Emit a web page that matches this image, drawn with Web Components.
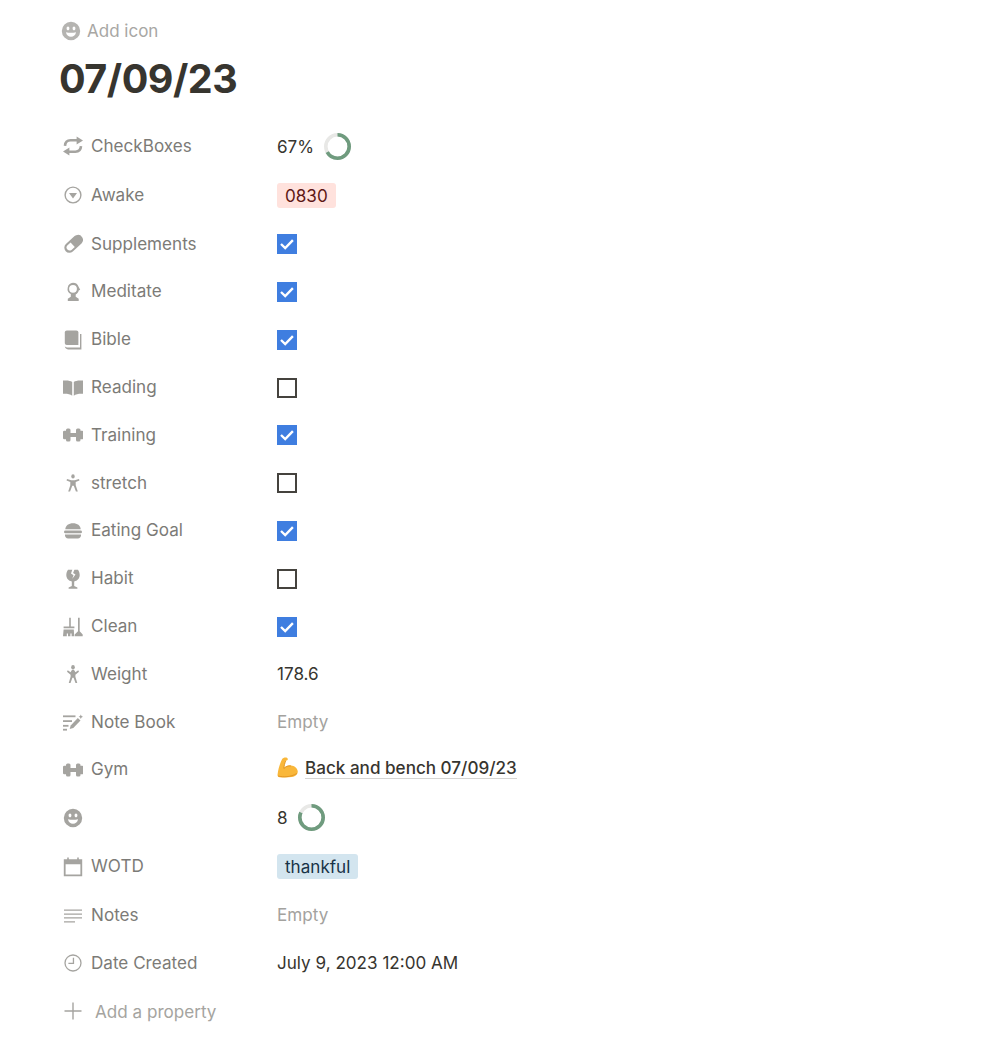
<!DOCTYPE html>
<html>
<head>
<meta charset="utf-8">
<style>
  html, body { margin: 0; background: #fff; }
  body { font-family: Inter, "Liberation Sans", sans-serif; color: #37352f; }
</style>
</head>
<body>
<page-header title="07/09/23"></page-header>
<property-list>
  <property-row icon="repeat" label="CheckBoxes"><value-ring value="67" text="67%"></value-ring></property-row>
  <property-row icon="awake" label="Awake" tall><value-tag color="red">0830</value-tag></property-row>
  <property-row icon="pill" label="Supplements"><check-box checked></check-box></property-row>
  <property-row icon="meditate" label="Meditate"><check-box checked></check-box></property-row>
  <property-row icon="bible" label="Bible"><check-box checked></check-box></property-row>
  <property-row icon="reading" label="Reading"><check-box></check-box></property-row>
  <property-row icon="dumbbell" label="Training"><check-box checked></check-box></property-row>
  <property-row icon="stretch" label="stretch"><check-box></check-box></property-row>
  <property-row icon="burger" label="Eating Goal"><check-box checked></check-box></property-row>
  <property-row icon="glass" label="Habit"><check-box></check-box></property-row>
  <property-row icon="clean" label="Clean"><check-box checked></check-box></property-row>
  <property-row icon="person" label="Weight">178.6</property-row>
  <property-row icon="note" label="Note Book"><value-empty></value-empty></property-row>
  <property-row icon="dumbbell" label="Gym"><page-link>Back and bench 07/09/23</page-link></property-row>
  <property-row icon="smile" label=""><value-ring value="82" text="8"></value-ring></property-row>
  <property-row icon="calendar" label="WOTD" tall><value-tag color="blue">thankful</value-tag></property-row>
  <property-row icon="lines" label="Notes"><value-empty></value-empty></property-row>
  <property-row icon="clock" label="Date Created">July 9, 2023 12:00 AM</property-row>
  <add-property></add-property>
</property-list>

<script>
const ICONS = {
  repeat: `<path d="M2 9.800C2.200 6.400 4.500 4.300 7.600 4.300h7" fill="none" stroke="currentColor" stroke-width="2.600"/><path d="M13.600.6l6.400 3.900-6.400 3.900z"/><path d="M18 10.200c-.2 3.400-2.500 5.500-5.600 5.500h-7" fill="none" stroke="currentColor" stroke-width="2.600"/><path d="M6.400 11.600L0 15.500l6.400 3.900z"/>`,
  awake: `<circle cx="10" cy="10" r="7.900" fill="none" stroke="currentColor" stroke-width="1.400"/><path d="M6 8h8l-4 5.500z"/>`,
  pill: `<path fill-rule="evenodd" d="M13.200 1.200a5 5 0 0 1 5.300 8.200l-8.700 8a5 5 0 0 1-6.900-7.300l8.700-8c.7-.5 1.500-.8 1.600-.9zM4.300 11.400a3.100 3.100 0 0 0 4.200 4.500l3.300-3-4.200-4.500z"/>`,
  meditate: `<path fill-rule="evenodd" d="M10 .8a6 6 0 0 1 5.700 4.300l1.500 2.600-1.500.8c-.3 1.800-1.400 3.200-3 3.900v2.400l3 1.900V19H4.800v-2.300l3-1.900v-2.700A6 6 0 0 1 10 .8zm0 2.100a3.900 3.900 0 1 0 0 7.800 3.900 3.900 0 0 0 0-7.800z"/>`,
  bible: `<path d="M1.800 2.600C1.800 1.500 2.700.6 3.800.6h9.600c1.100 0 2 .9 2 2V15H3.800c-1.100 0-2-.9-2-2z"/><path d="M17 4h1.400v15.400H5c-1.600 0-2.900-1.200-3.200-2.800.6.500 1.400.8 2.200.8h13z"/>`,
  reading: `<path d="M9.200 4C7.400 2.600 4.200 2.200 0 2.600v13.200c3.900-.2 7 .2 9.200 2z"/><path d="M10.800 4c1.800-1.400 5-1.800 9.200-1.400v13.200c-3.900-.2-7 .2-9.200 2z"/>`,
  dumbbell: `<rect x="0" y="5.800" width="4" height="8.400" rx="1.300"/><rect x="3" y="3.500" width="4.500" height="13" rx="1.500"/><rect x="7" y="8" width="7" height="4"/><rect x="13" y="3.500" width="4.500" height="13" rx="1.500"/><rect x="16.500" y="5.800" width="4" height="8.400" rx="1.300"/>`,
  stretch: `<g transform="translate(2.500 1) scale(.75 .92)"><circle cx="10" cy="2.700" r="2.300"/><path d="M2 5.300l5.800 1.600h4.400L18 5.300l.6 1.800-5 1.700v3.300l2.800 6.900h-2.500l-2.900-6.200H9l-2.900 6.200H3.600l2.800-6.900V8.800l-5-1.700z"/></g>`,
  burger: `<path d="M2.300 8.300C2.500 4.500 5.700 2.300 10 2.300s7.500 2.200 7.700 6z"/><rect x="1" y="9.500" width="18" height="2.800" rx="1.400"/><path d="M2 13.500h16v.7c0 1.900-1.300 3.300-3.100 3.300H5.100c-1.800 0-3.100-1.400-3.100-3.300z"/>`,
  glass: `<path fill-rule="evenodd" d="M5 .8h4.300L8 4.600l2.500 1.700-1.200 3.500 3.200-4.200-2.400-1.600L11.400.8H15c1.100 1.500 1.700 3.400 1.700 5.300 0 3.400-2.300 5.900-5.500 6.400v4.600l3.200 1.300v1.300H5.600v-1.300l3.200-1.300v-4.600c-3.200-.5-5.500-3-5.500-6.400C3.300 4.200 3.900 2.300 5 .8z"/>`,
  clean: `<path d="M6.200.8h1.600v8.800h3.600v1.600H.6V9.600h5.600z"/><path d="M.6 12.400h10.200l.4 6.800H8.600v-2.600H7.400v2.600H5v-2.600H3.800v2.600H0z"/><path d="M15 .8h1.700v13.500l3 3.300v1.600h-8v-1.600l3.300-3.300z"/>`,
  person: `<g transform="translate(2.500 .5) scale(.75 .95)"><circle cx="10" cy="2.800" r="2.400"/><path d="M10 5.400c1 0 1.700.4 2.200 1.200l1 1.500 3.800-2 1 1.500-4.800 3.100v2.100l2.500 6.800h-2.400L10.800 14H9.200l-2.500 5.600H4.300l2.500-6.800v-2.100L2 7.600l1-1.500 3.800 2 1-1.500c.5-.8 1.200-1.200 2.200-1.200z"/></g>`,
  note: `<path d="M0 3.400h12.500v1.800H0z"/><path d="M0 8.200h9v1.800H0z"/><path d="M0 12.900h5.500v1.800H0z"/><path d="M0 16.800h4v1.800H0z"/><path d="M14.800 6l2.700 2.500-7.200 7.500-3.600 1.100 1-3.600z"/><path d="M17.800 2.400l.7 1.600 1.500.7-1.500.7-.7 1.600-.7-1.600-1.500-.7 1.500-.7z"/>`,
  smile: `<path fill-rule="evenodd" d="M10 .8a9.200 9.200 0 1 1 0 18.400A9.200 9.200 0 0 1 10 .8zM7 5.600c-.8 0-1.400.8-1.400 1.800S6.200 9.200 7 9.200s1.400-.8 1.400-1.800S7.800 5.600 7 5.600zm6 0c-.8 0-1.400.8-1.400 1.800s.6 1.800 1.400 1.800 1.400-.8 1.400-1.800-.6-1.800-1.400-1.800zM5 11.300c.4 2.800 2.400 4.500 5 4.500s4.600-1.700 5-4.500c-3.300.7-6.700.7-10 0z"/>`,
  calendar: `<path fill-rule="evenodd" d="M4.200.4h1.600v1.900h8.400V.4h1.600v1.900h3.400v17H.8v-17h3.400zM2.600 7.200v10.300h14.800V7.200z"/>`,
  lines: `<path d="M1 3.500h18v1.300H1zM1 7.400h18v1.300H1zM1 11.300h18v1.300H1zM1 15.200h11v1.300H1z"/>`,
  clock: `<circle cx="10" cy="10" r="8" fill="none" stroke="currentColor" stroke-width="1.300"/><path d="M9.800 4.800h1.300v6.300H5.400V9.800h4.400z"/>`,
  plus: `<path d="M9.300 1.500h1.400v7.800h7.800v1.400h-7.800v7.800H9.300v-7.800H1.500V9.300h7.800z"/>`
};

const FACE_ICON = `<svg width="20" height="20" viewBox="0 0 20 20" fill="currentColor">${ICONS.smile}</svg>`;

class PageHeader extends HTMLElement {
  connectedCallback() {
    if (this.shadowRoot) return;
    const title = this.getAttribute("title");
    this.removeAttribute("title");
    this.attachShadow({ mode: "open" }).innerHTML = `
      <style>
        :host { display: block; padding: 21px 0 0 61px; }
        .add { display: flex; align-items: center; gap: 6px; height: 20px; color: #a8a7a4; font-size: 17px; }
        .add svg { display: block; width: 20px; height: 20px; color: #b5b4b1; }
        h1 { margin: 9px 0 0 -2px; height: 58px; font-size: 39.5px; line-height: 58px; font-weight: 700; letter-spacing: -.5px; color: #37352f; }
      </style>
      <div class="add">${FACE_ICON}<span>Add icon</span></div>
      <h1>${title}</h1>`;
  }
}

class PropertyList extends HTMLElement {
  constructor() {
    super();
    this.attachShadow({ mode: "open" }).innerHTML = `
      <style>:host { display: flex; flex-direction: column; padding: 14.5px 0 0 63px; }</style>
      <slot></slot>`;
  }
}

class PropertyRow extends HTMLElement {
  connectedCallback() {
    if (this.shadowRoot) return;
    const icon = ICONS[this.getAttribute("icon")];
    this.attachShadow({ mode: "open" }).innerHTML = `
      <style>
        :host { display: grid; grid-template-columns: 214px 1fr; align-items: center; height: 47.8px; font-size: 17.1px; color: #37352f; }
        :host([tall]) { height: 50px; }
        .name { display: flex; align-items: center; gap: 8px; color: #7c7b77; }
        .name span { margin-bottom: 2px; }
        svg { display: block; flex: none; width: 20px; height: 20px; color: #a5a4a0; }
        .value { display: flex; align-items: center; padding-bottom: 2px; }
        ::slotted(*) { margin-top: 2px; }
      </style>
      <div class="name"><svg viewBox="0 0 20 20" fill="currentColor">${icon}</svg><span>${this.getAttribute("label")}</span></div>
      <div class="value"><slot></slot></div>`;
  }
}

class CheckBox extends HTMLElement {
  connectedCallback() {
    if (this.shadowRoot) return;
    const mark = this.hasAttribute("checked")
      ? `<svg viewBox="0 0 20 20" width="20" height="20"><path d="M4 10l4.200 4 7.700-7.800" fill="none" stroke="#fff" stroke-width="2.400"/></svg>`
      : "";
    this.attachShadow({ mode: "open" }).innerHTML = `
      <style>
        :host { display: block; width: 20px; height: 20px; box-sizing: border-box; border: 2px solid #45433e; }
        :host([checked]) { border: 0; background: #3f7ee0; }
        svg { display: block; }
      </style>${mark}`;
  }
}

class ValueRing extends HTMLElement {
  connectedCallback() {
    if (this.shadowRoot) return;
    const value = this.getAttribute("value");
    this.attachShadow({ mode: "open" }).innerHTML = `
      <style>
        :host { display: flex; align-items: center; gap: 10px; }
        svg { display: block; transform: rotate(-90deg); }
      </style>
      <span>${this.getAttribute("text")}</span>
      <svg width="27" height="27" viewBox="0 0 27 27" fill="none" stroke-width="3.6">
        <circle cx="13.5" cy="13.5" r="11.7" stroke="#e8e8e6"/>
        <circle cx="13.5" cy="13.5" r="11.7" stroke="#6f9b7e" pathLength="100" stroke-dasharray="${value} 100"/>
      </svg>`;
  }
}

class ValueTag extends HTMLElement {
  constructor() {
    super();
    this.attachShadow({ mode: "open" }).innerHTML = `
      <style>
        :host { display: block; padding: 0 8px; height: 25px; line-height: 25px; border-radius: 3px; font-size: 17.1px; }
        :host([color="red"]) { background: #ffe2dd; color: #5d1715; }
        :host([color="blue"]) { background: #d3e5ef; color: #183347; }
      </style>
      <slot></slot>`;
  }
}

class ValueEmpty extends HTMLElement {
  constructor() {
    super();
    this.attachShadow({ mode: "open" }).innerHTML = `
      <style>:host { display: block; margin-bottom: 2px; color: #a3a29e; }</style>Empty`;
  }
}

class PageLink extends HTMLElement {
  constructor() {
    super();
    this.attachShadow({ mode: "open" }).innerHTML = `
      <style>
        :host { display: flex; align-items: center; gap: 6px; padding-bottom: 3px; font-weight: 500; }
        svg { display: block; flex: none; }
        span { border-bottom: 1px solid #d6d5d3; line-height: 20px; }
      </style>
      <svg width="22" height="22" viewBox="0 0 22 22">
        <path d="M7 .8c1.700-.5 3.500 0 3.800 1.200.3 1-.8 1.600-2 1.800-.8 2.300-1.600 4.700-1.500 7 1.600-1.900 4-2.800 6.700-2.400 3.300.4 6.300 2.500 6.700 5.500.4 3-1.800 5.600-5.700 6.100-4.400.6-8.800.6-12.500.2C1 20.200.3 19 .6 17.200 1.200 12 3 6 5.300 1.800c.4-.5 1-.8 1.700-1z" fill="#f9b73a"/>
        <path d="M8.800 3.800c-1 2.400-1.900 5-1.900 7.700 1.700-2 4.300-2.900 7-2.500M1 19c5.500 1.300 12 1.300 19-2.500" fill="none" stroke="#dd8f1f" stroke-width=".8"/>
      </svg>
      <span><slot></slot></span>`;
  }
}

class AddProperty extends HTMLElement {
  constructor() {
    super();
    this.attachShadow({ mode: "open" }).innerHTML = `
      <style>
        :host { display: flex; align-items: center; gap: 12px; height: 47.8px; font-size: 17.1px; color: #a5a4a0; }
        svg { display: block; flex: none; width: 20px; height: 20px; }
      </style>
      <svg viewBox="0 0 20 20" fill="currentColor">${ICONS.plus}</svg><span>Add a property</span>`;
  }
}

customElements.define("page-header", PageHeader);
customElements.define("property-list", PropertyList);
customElements.define("property-row", PropertyRow);
customElements.define("check-box", CheckBox);
customElements.define("value-ring", ValueRing);
customElements.define("value-tag", ValueTag);
customElements.define("value-empty", ValueEmpty);
customElements.define("page-link", PageLink);
customElements.define("add-property", AddProperty);
</script>
</body>
</html>
